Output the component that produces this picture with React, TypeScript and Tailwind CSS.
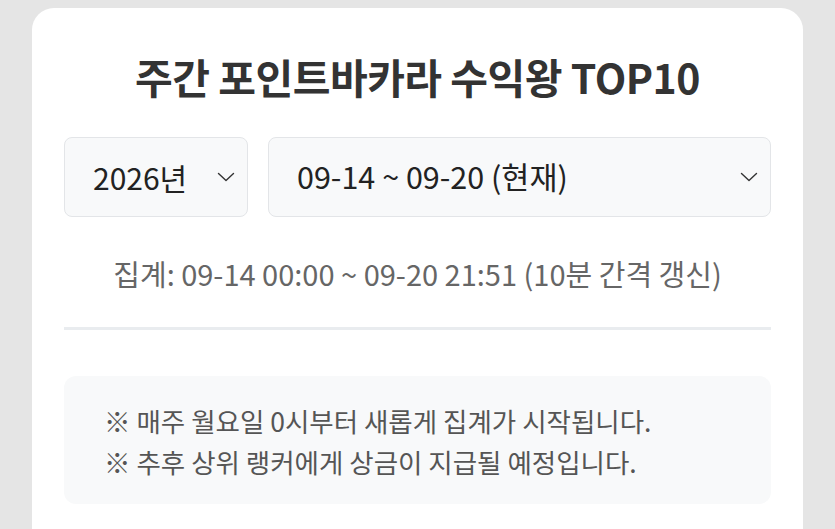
import React from 'react';

const font = { fontFamily: '"Noto Sans CJK KR", "Noto Sans", sans-serif' };

const Chevron: React.FC = () => (
  <svg width="18" height="10" viewBox="0 0 18 10" fill="none" className="shrink-0">
    <path d="M1.5 1.5 L9 8.5 L16.5 1.5" stroke="#333" strokeWidth="1.4" strokeLinecap="round" strokeLinejoin="round" />
  </svg>
);

const App: React.FC = () => {
  return (
    <div className="min-h-screen bg-[#e5e5e5] px-8 pt-2 overflow-hidden" style={font}>
      <div className="bg-white rounded-t-[22px] px-8 pt-[44px] pb-10 min-h-[540px]">
        <h1 className="text-center text-[41px] leading-[49px] font-bold text-[#333] tracking-[-0.5px]">
          주간 포인트바카라 수익왕 TOP10
        </h1>

        <div className="flex gap-5 mt-9">
          <div className="w-[184px] h-20 rounded-lg border border-[#e3e5e8] bg-[#f8f9fa] flex items-center justify-between pl-7 pr-3">
            <span className="text-[30px] text-[#222]">2026년</span>
            <Chevron />
          </div>
          <div className="flex-1 h-20 rounded-lg border border-[#e3e5e8] bg-[#f8f9fa] flex items-center justify-between pl-7 pr-3">
            <span className="text-[30.5px] text-[#222]">09-14 ~ 09-20 (현재)</span>
            <Chevron />
          </div>
        </div>

        <p className="mt-[38px] text-center text-[29px] leading-[36px] text-[#666]">
          집계: 09-14 00:00 ~ 09-20 21:51 (10분 간격 갱신)
        </p>

        <div className="mt-9 h-[3px] bg-[#e9ecef]" />

        <div className="mt-[46px] rounded-xl bg-[#f8f9fa] pl-10 pr-6 pt-6 pb-[22px] text-[26.5px] leading-[41px] text-[#555]">
          <p>※ 매주 월요일 0시부터 새롭게 집계가 시작됩니다.</p>
          <p>※ 추후 상위 랭커에게 상금이 지급될 예정입니다.</p>
        </div>
      </div>
    </div>
  );
};

export default App;
